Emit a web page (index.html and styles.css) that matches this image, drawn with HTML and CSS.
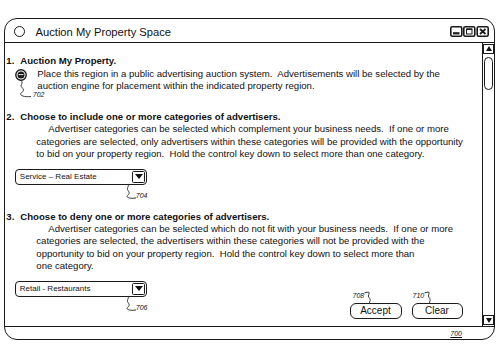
FILE: index.html
```html
<!DOCTYPE html>
<html lang="en">
<head>
  <meta charset="UTF-8">
  <title>Auction My Property Space</title>
  <link rel="stylesheet" href="styles.css">
</head>
<body>
  <div class="window">
    <div class="titlebar">
      <span class="title-dot"></span>
      <span class="title">Auction My Property Space</span>
      <svg class="win-btns" width="39" height="11" viewBox="0 0 39 11">
        <rect x="0.8" y="0.8" width="11" height="9.4" rx="1.5" fill="none" stroke="#1a1a1a" stroke-width="1.6"/>
        <rect x="3" y="6.2" width="6.5" height="2.2" fill="#1a1a1a"/>
        <rect x="13.8" y="0.8" width="11" height="9.4" rx="1.5" fill="none" stroke="#1a1a1a" stroke-width="1.6"/>
        <rect x="16.5" y="3" width="5.5" height="5" fill="none" stroke="#1a1a1a" stroke-width="1"/>
        <line x1="16.5" y1="3.3" x2="22" y2="3.3" stroke="#1a1a1a" stroke-width="1.4"/>
        <rect x="27.2" y="0.8" width="11" height="9.4" rx="1.5" fill="none" stroke="#1a1a1a" stroke-width="1.6"/>
        <path d="M30 3 L35.5 8 M35.5 3 L30 8" stroke="#1a1a1a" stroke-width="1.7"/>
      </svg>
    </div>

    <div class="main">
      <div class="content">
        <section class="step step1">
          <h2><span class="num">1.</span>Auction My Property.</h2>
          <div class="choice">
            <span class="radio">
              <svg width="12" height="12" viewBox="0 0 12 12">
                <circle cx="6" cy="6" r="5.2" fill="none" stroke="#1a1a1a" stroke-width="1.4"/>
                <circle cx="6" cy="6" r="3.5" fill="#1a1a1a"/>
                <line x1="3.6" y1="5.6" x2="8.4" y2="5.6" stroke="#fff" stroke-width="0.9"/>
              </svg>
              <span class="callout c702">
                <svg width="17" height="17" viewBox="0 0 17 17"><path d="M6.5 0 C8.5 2.5 4.5 4 7 6.5 S8.5 10.5 6 12 C4 13.5 7.5 16.5 16 15.5" fill="none" stroke="#222" stroke-width="0.9"/></svg>
                <i>702</i>
              </span>
            </span>
            <p>Place this region in a public advertising auction system.&nbsp; Advertisements will be selected by the<br>auction engine for placement within the indicated property region.</p>
          </div>
        </section>

        <section class="step step2">
          <h2><span class="num">2.</span>Choose to include one or more categories of advertisers.</h2>
          <p class="desc">Advertiser categories can be selected which complement your business needs.&nbsp; If one or more<br>categories are selected, only advertisers within these categories will be provided with the opportunity<br>to bid on your property region.&nbsp; Hold the control key down to select more than one category.</p>
          <div class="select">
            <span>Service &ndash; Real Estate</span>
            <span class="select-arrow"></span>
            <span class="callout c-sel">
              <svg width="15" height="16" viewBox="0 0 15 16"><path d="M7 0 C8.5 2.5 5 4 7 6.5 S8 10 6.5 11.5 C5 13 7.5 15 15 14" fill="none" stroke="#222" stroke-width="0.9"/></svg>
              <i>704</i>
            </span>
          </div>
        </section>

        <section class="step step3">
          <h2><span class="num">3.</span>Choose to deny one or more categories of advertisers.</h2>
          <p class="desc">Advertiser categories can be selected which do not fit with your business needs.&nbsp; If one or more<br>categories are selected, the advertisers within these categories will not be provided with the<br>opportunity to bid on your property region.&nbsp; Hold the control key down to select more than<br>one category.</p>
          <div class="final">
            <div class="select">
              <span>Retail - Restaurants</span>
              <span class="select-arrow"></span>
              <span class="callout c-sel">
                <svg width="15" height="16" viewBox="0 0 15 16"><path d="M7 0 C8.5 2.5 5 4 7 6.5 S8 10 6.5 11.5 C5 13 7.5 15 15 14" fill="none" stroke="#222" stroke-width="0.9"/></svg>
                <i>706</i>
              </span>
            </div>
            <div class="actions">
              <span class="btn accept">Accept
                <span class="callout c-btn"><i>708</i><svg width="9" height="13" viewBox="0 0 9 13"><path d="M0.5 1.8 L4.5 1 C6.5 2 3 4.5 5 6.5 S6 10 5 13" fill="none" stroke="#222" stroke-width="0.9"/></svg></span>
              </span>
              <span class="btn clear">Clear
                <span class="callout c-btn c710"><i>710</i><svg width="9" height="13" viewBox="0 0 9 13"><path d="M0.5 1.8 L4.5 1 C6.5 2 3 4.5 5 6.5 S6 10 5 13" fill="none" stroke="#222" stroke-width="0.9"/></svg></span>
              </span>
            </div>
          </div>
        </section>
      </div>

      <div class="scrollbar">
        <span class="sb-btn up"><span class="tri-up"></span></span>
        <span class="thumb"></span>
        <span class="sb-btn down"><span class="tri-down"></span></span>
      </div>
    </div>

    <div class="statusbar"><span class="ref-num">700</span></div>
  </div>
</body>
</html>
```

FILE: styles.css
```css
* { margin:0; padding:0; box-sizing:border-box; }
body { font-family:"Liberation Sans", Arial, sans-serif; color:#111; background:#fff; }

/* window frame */
.window {
  margin:18px 0 0 4px; width:491px; height:322px;
  border:1.7px solid #1a1a1a; border-radius:13px;
  display:flex; flex-direction:column; overflow:hidden;
}
.titlebar { flex:none; height:24px; padding-top:2px; display:flex; align-items:center; border-bottom:1.6px solid #1a1a1a; }
.title-dot { width:11px; height:11px; border:1.3px solid #1a1a1a; border-radius:50%; margin-left:8.5px; flex:none; }
.title { margin-left:11px; font-size:11.2px; }
.win-btns { margin-left:auto; margin-right:5.3px; }

.main { flex:1; display:flex; min-height:0; }
.content { flex:1; padding:12.3px 0 0 1.3px; font-size:9.6px; line-height:12.4px; }

/* steps */
.step h2 { font-size:9.6px; font-weight:bold; }
.num { display:inline-block; width:14px; }
.step1 { margin-bottom:18.5px; }
.step2 { margin-bottom:26px; }
.choice { display:flex; align-items:flex-start; }
.radio { position:relative; flex:none; width:12px; height:12px; margin:1.5px 0 0 9px; }
.radio svg { display:block; }
.choice p { margin-left:10px; }
.desc { margin-left:30px; text-indent:12px; }

/* dropdowns */
.select {
  position:relative; width:132px; height:16px; margin:8px 0 0 9px; flex:none;
  border:1.6px solid #1a1a1a; border-radius:4px;
  display:flex; align-items:center; justify-content:space-between;
  padding:0 1px 0 3.5px; font-size:8px; line-height:10px;
}
.select-arrow { width:13px; height:12px; border:1.6px solid #1a1a1a; border-radius:1.5px; display:flex; align-items:center; justify-content:center; }
.select-arrow::after { content:""; border-left:4px solid transparent; border-right:4px solid transparent; border-top:5.5px solid #111; }

/* reference callouts */
.callout { position:absolute; display:flex; align-items:flex-end; font-size:7px; line-height:7px; }
.callout svg { display:block; flex:none; }
.callout i { padding-bottom:1px; }
.c702 { top:100%; left:0; }
.c702 i { padding-bottom:0; margin-left:0.5px; }
.c-sel { top:100%; left:104.5px; }
.c-btn { bottom:100%; left:2px; align-items:flex-start; }
.c-btn i { padding:1px 0 0; }
.c710 { left:0; }

/* buttons */
.final { display:flex; align-items:flex-start; }
.final .select { margin-top:8px; }
.actions { margin:30.5px 19.5px 0 auto; display:flex; gap:10px; }
.btn {
  position:relative; width:52px; height:15.5px;
  border:1.6px solid #1a1a1a; border-radius:6px;
  display:flex; align-items:center; justify-content:center; font-size:10px;
}
.btn.clear { width:51px; }

/* scrollbar */
.scrollbar { flex:none; width:12px; border-left:1.6px solid #1a1a1a; display:flex; flex-direction:column; align-items:center; }
.sb-btn { width:10.5px; height:10px; border:1.4px solid #1a1a1a; display:flex; align-items:center; justify-content:center; margin-top:0.5px; }
.sb-btn.down { margin:auto 0 1px; }
.tri-up { border-left:3.5px solid transparent; border-right:3.5px solid transparent; border-bottom:5px solid #111; }
.tri-down { border-left:3.5px solid transparent; border-right:3.5px solid transparent; border-top:5px solid #111; }
.thumb { width:9.5px; height:33px; margin-top:3px; border:1.4px solid #1a1a1a; border-radius:5px; }

/* status bar */
.statusbar { flex:none; height:13px; border-top:1.6px solid #1a1a1a; display:flex; align-items:center; justify-content:flex-end; }
.ref-num { font-size:7px; font-style:italic; text-decoration:underline; margin-right:32px; }
```
